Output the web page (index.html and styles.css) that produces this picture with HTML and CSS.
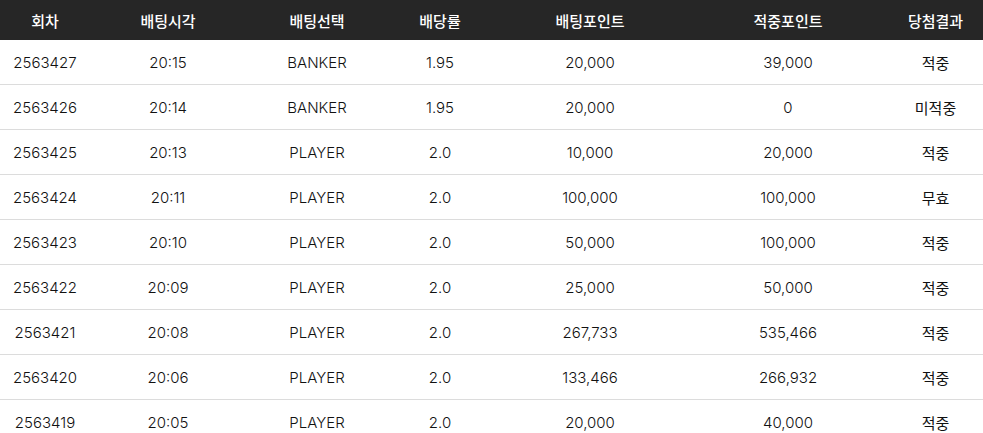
FILE: index.html
```html
<!DOCTYPE html>
<html lang="ko">
<head>
<meta charset="utf-8">
<link rel="stylesheet" href="styles.css">
</head>
<body>
<div class="table">
  <div class="row head">
    <div>회차</div><div>배팅시각</div><div>배팅선택</div><div>배당률</div><div>배팅포인트</div><div>적중포인트</div><div>당첨결과</div>
  </div>
  <div class="row"><div>2563427</div><div>20:15</div><div>BANKER</div><div>1.95</div><div>20,000</div><div>39,000</div><div>적중</div></div>
  <div class="row"><div>2563426</div><div>20:14</div><div>BANKER</div><div>1.95</div><div>20,000</div><div>0</div><div>미적중</div></div>
  <div class="row"><div>2563425</div><div>20:13</div><div>PLAYER</div><div>2.0</div><div>10,000</div><div>20,000</div><div>적중</div></div>
  <div class="row"><div>2563424</div><div>20:11</div><div>PLAYER</div><div>2.0</div><div>100,000</div><div>100,000</div><div>무효</div></div>
  <div class="row"><div>2563423</div><div>20:10</div><div>PLAYER</div><div>2.0</div><div>50,000</div><div>100,000</div><div>적중</div></div>
  <div class="row"><div>2563422</div><div>20:09</div><div>PLAYER</div><div>2.0</div><div>25,000</div><div>50,000</div><div>적중</div></div>
  <div class="row"><div>2563421</div><div>20:08</div><div>PLAYER</div><div>2.0</div><div>267,733</div><div>535,466</div><div>적중</div></div>
  <div class="row"><div>2563420</div><div>20:06</div><div>PLAYER</div><div>2.0</div><div>133,466</div><div>266,932</div><div>적중</div></div>
  <div class="row"><div>2563419</div><div>20:05</div><div>PLAYER</div><div>2.0</div><div>20,000</div><div>40,000</div><div>적중</div></div>
</div>
</body>
</html>
```
FILE: styles.css
```css
html, body {
  margin: 0;
  padding: 0;
  background: #fff;
}
body {
  font-family: "Inter", "Noto Sans CJK KR", sans-serif;
  font-size: 15px;
  font-weight: 300;
  color: #111;
}
.table {
  width: 983px;
}
.row {
  display: grid;
  grid-template-columns: 90px 156px 142px 104px 196px 200px 95px;
  height: 44px;
  border-bottom: 1px solid #dcdcdc;
  align-items: center;
  text-align: center;
}
.row > div:last-child {
  font-weight: 400;
}
.row.head {
  height: 40px;
  border-bottom: none;
  background: #262626;
  color: #fff;
}
.row.head > div {
  font-weight: 500;
}
```
